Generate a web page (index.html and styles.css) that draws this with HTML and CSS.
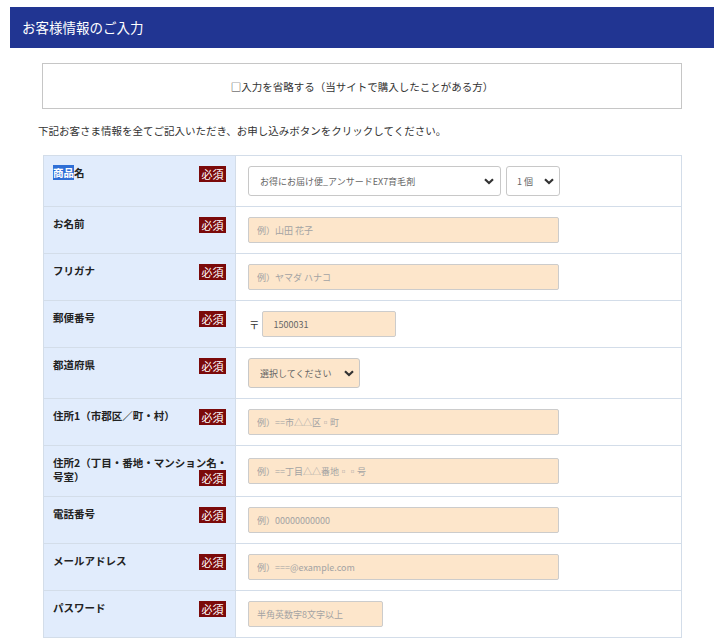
FILE: index.html
```html
<!DOCTYPE html>
<html lang="ja">
<head>
<meta charset="utf-8">
<title>お客様情報のご入力</title>
<link rel="stylesheet" href="styles.css">
</head>
<body>
<div class="page">
  <h2 class="head">お客様情報のご入力</h2>
  <div class="content">
    <div class="skip">□入力を省略する（当サイトで購入したことがある方）</div>
    <p class="intro">下記お客さま情報を全てご記入いただき、お申し込みボタンをクリックしてください。</p>
    <table class="form">
      <tr class="tall">
        <th><span class="sel">商品</span>名<span class="req">必須</span></th>
        <td>
          <div class="pair">
            <select class="dd dd-product"><option>お得にお届け便_アンサードEX7育毛剤</option></select>
            <select class="dd dd-qty"><option>1 個</option></select>
          </div>
        </td>
      </tr>
      <tr>
        <th>お名前<span class="req">必須</span></th>
        <td><input class="field" placeholder="例）山田 花子"></td>
      </tr>
      <tr>
        <th>フリガナ<span class="req">必須</span></th>
        <td><input class="field" placeholder="例）ヤマダ ハナコ"></td>
      </tr>
      <tr>
        <th>郵便番号<span class="req">必須</span></th>
        <td><div class="zip"><span class="mark">〒</span><input class="field short" value="1500031"></div></td>
      </tr>
      <tr class="tall">
        <th>都道府県<span class="req">必須</span></th>
        <td><select class="dd dd-pref"><option>選択してください</option></select></td>
      </tr>
      <tr>
        <th>住所1（市郡区／町・村）<span class="req">必須</span></th>
        <td><input class="field" placeholder="例）==市△△区▫町"></td>
      </tr>
      <tr>
        <th>住所2（丁目・番地・マンション名・号室）<span class="req">必須</span></th>
        <td><input class="field" placeholder="例）==丁目△△番地▫▫号"></td>
      </tr>
      <tr>
        <th>電話番号<span class="req">必須</span></th>
        <td><input class="field" placeholder="例）00000000000"></td>
      </tr>
      <tr>
        <th>メールアドレス<span class="req">必須</span></th>
        <td><input class="field" placeholder="例）===@example.com"></td>
      </tr>
      <tr>
        <th>パスワード<span class="req">必須</span></th>
        <td><input class="field pw" placeholder="半角英数字8文字以上"></td>
      </tr>
    </table>
  </div>
</div>
</body>
</html>
```
FILE: styles.css
```css
html, body {
  margin: 0;
  padding: 0;
  background: #ffffff;
}
body {
  font-family: "Noto Sans CJK JP", "Noto Sans", sans-serif;
  color: #333333;
  font-size: 10.5px;
}
.page {
  padding: 7px 5px 0 10px;
}
.head {
  margin: 0;
  height: 41px;
  background: #213592;
  color: #ffffff;
  font-size: 13.5px;
  font-weight: normal;
  line-height: 41px;
  padding-left: 12px;
}
.content {
  padding: 15px 0 0 28px;
}
.skip {
  margin-left: 4px;
  width: 638px;
  height: 44px;
  border: 1px solid #c6c6c6;
  display: flex;
  align-items: center;
  justify-content: center;
  font-size: 10.5px;
  color: #333333;
}
.intro {
  margin: 14px 0 16px 0;
  line-height: 16px;
  font-size: 10.5px;
  color: #333333;
}
.form {
  margin-left: 5px;
  width: 639px;
  border-collapse: collapse;
}
.form th,
.form td {
  border: 1px solid #d3dde9;
}
.form th {
  width: 177px;
  background: #e1ecfc;
  text-align: left;
  vertical-align: top;
  padding: 10px 5px 10px 9px;
  font-size: 10.5px;
  line-height: 14px;
  font-weight: bold;
  color: #222222;
}
.sel {
  background: #2f6fd6;
  color: #ffffff;
}
.req {
  float: right;
  margin-right: 4px;
  width: 27px;
  height: 16px;
  line-height: 16px;
  background: #7b0a0a;
  color: #ffffff;
  font-size: 11px;
  font-weight: normal;
  text-align: center;
}
.form td {
  padding: 10px 12px;
  vertical-align: middle;
}
.field {
  box-sizing: border-box;
  display: block;
  width: 311px;
  height: 26px;
  margin: 0;
  padding: 0 8px;
  border: 1px solid #cccccc;
  border-radius: 2px;
  background: #fde6cb;
  font-family: inherit;
  font-size: 9px;
  color: #666666;
}
.field::placeholder {
  color: #a3a3a3;
}
.field.short {
  width: 134px;
  padding-left: 11px;
}
.field.pw {
  width: 135px;
}
.zip {
  display: flex;
  align-items: center;
  gap: 2px;
}
.mark {
  font-size: 10.5px;
  color: #333333;
  padding-left: 1px;
}
.pair {
  display: flex;
  gap: 5px;
}
.dd {
  box-sizing: border-box;
  appearance: none;
  -webkit-appearance: none;
  height: 30px;
  margin: 0;
  border: 1px solid #c8c8c8;
  border-radius: 3px;
  background-color: #ffffff;
  background-image: url("data:image/svg+xml;utf8,<svg xmlns='http://www.w3.org/2000/svg' width='10' height='7' viewBox='0 0 10 7'><path d='M1 1.2 L5 5 L9 1.2' fill='none' stroke='%23333333' stroke-width='2.2'/></svg>");
  background-repeat: no-repeat;
  background-size: 10px 7px;
  font-family: inherit;
  font-size: 9px;
  color: #666666;
  display: block;
}
.dd-product {
  width: 253px;
  padding: 0 24px 0 11px;
  background-position: right 6px center;
}
.dd-qty {
  width: 54px;
  padding: 0 0 0 10px;
  background-position: right 5px center;
}
.dd-pref {
  width: 112px;
  padding: 0 0 0 11px;
  background-color: #fde6cb;
  background-position: right 5px center;
}
```
